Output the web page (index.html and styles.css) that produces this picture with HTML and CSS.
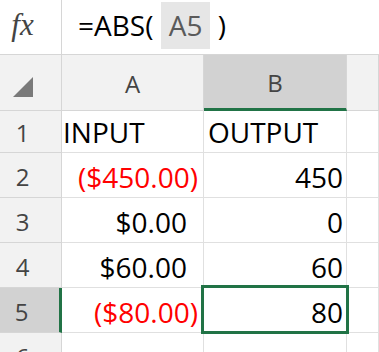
FILE: index.html
```html
<!DOCTYPE html>
<html lang="en">
<head>
<meta charset="utf-8">
<title>ABS</title>
<link rel="stylesheet" href="styles.css">
</head>
<body>
<div class="formula-bar">
  <div class="fx">fx</div>
  <div class="expr">=ABS( <span class="ref">A5</span> )</div>
</div>
<div class="sheet">
  <div class="corner">
    <svg width="20" height="20" viewBox="0 0 20 20"><polygon points="20,0 20,20 0,20" fill="#7a7a7a"/></svg>
  </div>
  <div class="col-head">A</div>
  <div class="col-head active">B</div>
  <div class="col-head"></div>

  <div class="row-head">1</div>
  <div class="cell">INPUT</div>
  <div class="cell text-b">OUTPUT</div>
  <div class="cell"></div>

  <div class="row-head">2</div>
  <div class="cell num neg">($450.00)</div>
  <div class="cell num">450</div>
  <div class="cell"></div>

  <div class="row-head">3</div>
  <div class="cell num pos">$0.00</div>
  <div class="cell num">0</div>
  <div class="cell"></div>

  <div class="row-head">4</div>
  <div class="cell num pos">$60.00</div>
  <div class="cell num">60</div>
  <div class="cell"></div>

  <div class="row-head active">5</div>
  <div class="cell num neg">($80.00)</div>
  <div class="cell num sel">80</div>
  <div class="cell"></div>

  <div class="row-head">6</div>
  <div class="cell"></div>
  <div class="cell"></div>
  <div class="cell"></div>
</div>
</body>
</html>
```

FILE: styles.css
```css
html, body {
	margin: 0;
	padding: 0;
	background: #fff;
}

body {
	width: 379px;
	height: 352px;
	overflow: hidden;
	font-family: "Open Sans", "Liberation Sans", sans-serif;
}

* {
	box-sizing: border-box;
}

.formula-bar {
	display: flex;
	height: 55px;
	border-bottom: 1px solid #d6d6d6;
}

.fx {
	width: 62px;
	padding-right: 16px;
	border-right: 1px solid #d6d6d6;
	text-align: center;
	font-family: "Liberation Serif", serif;
	font-style: italic;
	font-size: 31px;
	line-height: 49px;
	color: #444;
}

.expr {
	padding: 2px 0 0 16px;
	font-size: 28px;
	line-height: 47px;
	color: #000;
	white-space: pre;
}

.ref {
	display: inline-block;
	height: 47px;
	padding: 0 8px;
	line-height: 47px;
	background: #e6e6e6;
	color: #5a5a5a;
}

.sheet {
	display: grid;
	grid-template-columns: 62px 142px 143px 1fr;
	grid-template-rows: 56px 42px 45px 45px 45px 45px 45px;
}

.corner, .col-head, .row-head {
	background: #f2f2f2;
	border-right: 1px solid #d6d6d6;
	border-bottom: 1px solid #d6d6d6;
	color: #444;
	font-size: 24px;
	line-height: 24px;
}

.corner {
	display: flex;
	align-items: flex-end;
	padding: 0 0 13px 13px;
}

.col-head {
	display: flex;
	align-items: center;
	justify-content: center;
	padding-top: 2px;
}

.col-head.active {
	background: #d2d2d2;
	border-bottom: 3px solid #217346;
}

.row-head {
	display: flex;
	align-items: center;
	justify-content: center;
	padding: 3px 16px 0 0;
}

.row-head.active {
	background: #d2d2d2;
	border-right: 3px solid #217346;
}

.cell {
	display: flex;
	align-items: flex-end;
	padding: 0 3px 6px 1px;
	border-right: 1px solid #e0e0e0;
	border-bottom: 1px solid #e0e0e0;
	font-size: 28px;
	line-height: 28px;
	color: #000;
}

.text-b {
	padding-left: 4px;
}

.num {
	justify-content: flex-end;
}

.neg {
	color: #ff0000;
	padding-right: 5px;
}

.pos {
	padding-right: 16px;
}

.sel {
	position: relative;
}

.sel::after {
	content: "";
	position: absolute;
	left: -3px;
	right: -3px;
	top: -3px;
	bottom: -2px;
	border: 3px solid #217346;
	z-index: 1;
}
```
